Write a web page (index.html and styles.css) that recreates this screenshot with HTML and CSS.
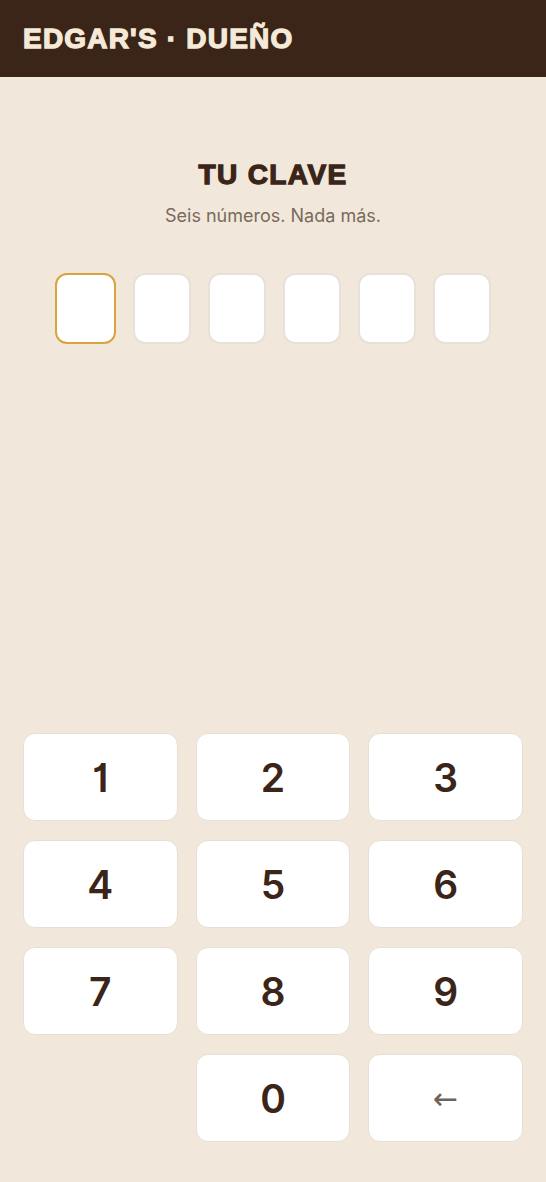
FILE: index.html
```html
<!DOCTYPE html>
<html lang="es">
<head>
  <meta charset="UTF-8" />
  <meta name="viewport" content="width=device-width, initial-scale=1.0"/>
  <title>Edgar's · Dueño</title>
  <link rel="stylesheet" href="styles.css">
</head>
<body>

  <div class="app">
    <!-- Header -->
    <header class="topbar">
      <div class="brand">EDGAR'S · DUEÑO</div>
    </header>

    <!-- PIN -->
    <main class="pin-screen">
      <div class="pin-head">
        <div class="title">TU CLAVE</div>
        <div class="subtitle">Seis números. Nada más.</div>
      </div>

      <div class="pin-row">
        <div class="pin-box focus"></div>
        <div class="pin-box"></div>
        <div class="pin-box"></div>
        <div class="pin-box"></div>
        <div class="pin-box"></div>
        <div class="pin-box"></div>
      </div>

      <div class="keypad">
        <button class="key">1</button>
        <button class="key">2</button>
        <button class="key">3</button>
        <button class="key">4</button>
        <button class="key">5</button>
        <button class="key">6</button>
        <button class="key">7</button>
        <button class="key">8</button>
        <button class="key">9</button>
        <div class="key-empty"></div>
        <button class="key">0</button>
        <button class="key back">←</button>
      </div>
    </main>
  </div>

</body>
</html>
```

FILE: styles.css
```css
* {
  box-sizing: border-box;
}

body {
  margin: 0;
  padding: 0;
  background-color: #f1e8db;
  font-family: Inter, "Noto Sans", sans-serif;
}

.app {
  display: flex;
  flex-direction: column;
  min-height: 1182px;
}

.topbar {
  height: 77px;
  background-color: #3b2418;
  display: flex;
  align-items: center;
  padding: 0 23px;
}

.brand {
  color: #f5e9d8;
  font-family: "Liberation Sans", Arial, sans-serif;
  font-weight: bold;
  font-size: 28px;
  letter-spacing: 1.2px;
  -webkit-text-stroke: 1.3px #f5e9d8;
  margin-top: 1px;
}

.pin-screen {
  flex: 1;
  display: flex;
  flex-direction: column;
  padding: 0 23px 40px;
}

.pin-head {
  text-align: center;
  padding-top: 82px;
}

.title {
  color: #3b2418;
  font-family: "Liberation Sans", Arial, sans-serif;
  font-weight: bold;
  font-size: 28px;
  letter-spacing: 1.4px;
  -webkit-text-stroke: 1.3px #3b2418;
}

.subtitle {
  margin-top: 14px;
  color: #7a6a5b;
  font-size: 18px;
}

.pin-row {
  display: flex;
  justify-content: center;
  gap: 17px;
  margin-top: 47px;
}

.pin-box {
  width: 58px;
  height: 71px;
  background-color: #fff;
  border: 2px solid #e8e1d9;
  border-radius: 12px;
}

.pin-box.focus {
  width: 61px;
  border: 2px solid #d9a33e;
}

.keypad {
  margin-top: auto;
  display: grid;
  grid-template-columns: repeat(3, 1fr);
  column-gap: 18px;
  row-gap: 19px;
}

.key {
  height: 88px;
  background-color: #fff;
  border: 1px solid #e6dfd6;
  border-radius: 12px;
  color: #3b2418;
  font-family: Inter, sans-serif;
  font-weight: 600;
  font-size: 39px;
  font-feature-settings: "cv01";
  cursor: pointer;
}

.key.back {
  color: #6f625a;
  font-family: "DejaVu Sans", sans-serif;
  font-weight: normal;
  font-size: 30px;
}
```
